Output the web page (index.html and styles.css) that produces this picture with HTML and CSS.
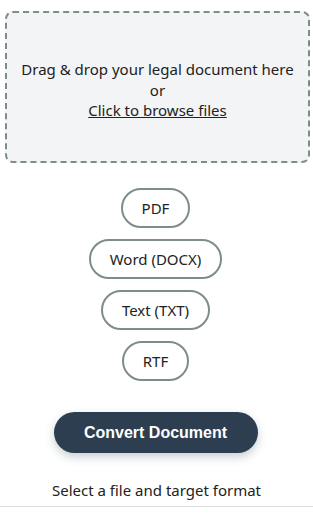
FILE: index.html
```html
<!DOCTYPE html>
<html lang="en">
<head>
  <meta charset="UTF-8">
  <meta name="viewport" content="width=device-width, initial-scale=1.0">
  <title>Legal Document Converter</title>
  <link rel="stylesheet" href="styles.css">
</head>
<body>

  <div class="converter">
    <!-- Зона загрузки -->
    <div class="drop-zone" id="dropZone">
      <p>Drag &amp; drop your legal document here</p>
      <p>or</p>
      <p><span class="browse-link">Click to browse files</span></p>
    </div>

    <!-- Форматы -->
    <div class="format-list">
      <button class="format-button">PDF</button>
      <button class="format-button">Word (DOCX)</button>
      <button class="format-button">Text (TXT)</button>
      <button class="format-button">RTF</button>
    </div>

    <button class="convert-button">Convert Document</button>

    <div class="status">Select a file and target format</div>
  </div>

</body>
</html>
```

FILE: styles.css
```css
body {
  font-family: "Noto Sans", "Open Sans", sans-serif;
  margin: 0;
  padding: 0;
  background-color: #fff;
  color: #222;
}

.converter {
  padding: 11px 7px 0 5px;
  display: flex;
  flex-direction: column;
  align-items: center;
}

.drop-zone {
  box-sizing: border-box;
  align-self: flex-start;
  width: calc(100% + 4px);
  height: 152px;
  padding-top: 6px;
  border: 2px dashed #7f8c8d;
  border-radius: 8px;
  background-color: #f3f4f6;
  display: flex;
  flex-direction: column;
  justify-content: center;
  align-items: center;
  text-align: center;
  font-size: 15px;
  line-height: 20.5px;
}

.drop-zone p {
  margin: 0;
}

.browse-link {
  text-decoration: underline;
  cursor: pointer;
}

.format-list {
  display: flex;
  flex-direction: column;
  align-items: center;
  gap: 11px;
  margin-top: 25px;
}

.format-button {
  font-family: "Noto Sans", "Open Sans", sans-serif;
  font-size: 15px;
  color: #222;
  background-color: #fff;
  border: 2px solid #7f8c8d;
  border-radius: 20px;
  height: 40px;
  padding: 0 19px;
  cursor: pointer;
}

.convert-button {
  margin-top: 31px;
  width: 204px;
  height: 41px;
  background-color: #2c3e50;
  color: #fff;
  font-family: "Liberation Sans", Arial, sans-serif;
  font-weight: bold;
  font-size: 16px;
  border: none;
  border-radius: 21px;
  box-shadow: 0 4px 10px rgba(44, 62, 80, 0.25);
  cursor: pointer;
}

.status {
  box-sizing: border-box;
  width: 313px;
  margin-left: 2px;
  margin-top: 27px;
  padding-bottom: 6px;
  text-align: center;
  font-size: 15px;
  line-height: 20px;
  color: #222;
  border-bottom: 1px solid #ddd;
}
```
